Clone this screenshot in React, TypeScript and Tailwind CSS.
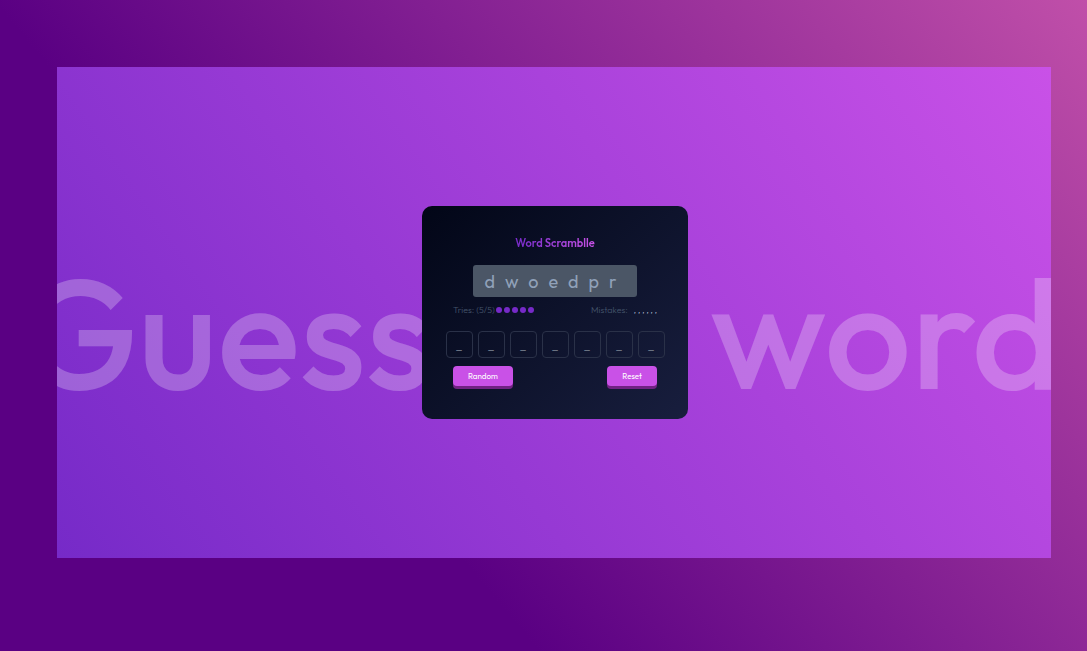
import React from "react";

const scrambled = "dwoedpr";
const maxTries = 5;
const maxMistakes = 6;

function ActionButton({ children }: { children: React.ReactNode }) {
  return (
    <button
      type="button"
      className="h-5 rounded bg-[#c951e7] px-[15px] text-[8px] leading-5 font-normal text-white shadow-[0_3px_0_#702283]"
    >
      {children}
    </button>
  );
}

export default function App() {
  return (
    <div className="flex min-h-screen flex-col bg-[linear-gradient(50deg,#5a0083_33%,#c04fa9_100%)] pt-[67px] pr-9 pb-[93px] pl-[57px] font-[Outfit,Lato,sans-serif]">
      <main className="relative isolate flex grow items-center justify-center overflow-hidden bg-[linear-gradient(55deg,#762ac8,#c951e7)] pl-[2px]">
        <div className="absolute inset-0 -z-10 flex items-center justify-between pt-[38px] text-[154px] leading-none font-medium text-white/25">
          <span className="-ml-[38px]">Guess</span>
          <span className="-mr-[10px]">word</span>
        </div>
        <section className="flex w-[266px] flex-col items-center rounded-[10px] bg-[linear-gradient(135deg,#020617,#181e3e)] px-6 pt-[29px] pb-8">
          <h1 className="bg-linear-to-r from-[#762ac8] to-[#c951e7] bg-clip-text text-[11px] leading-4 font-semibold text-transparent">
            Word Scramblle
          </h1>
          <p className="mt-[14px] h-8 rounded-[3px] bg-[#4b5666] pl-[11px] pr-[10px] text-[18px] leading-[34px] font-normal tracking-[10px] text-slate-400">
            {scrambled}
          </p>
          <div className="mt-[7px] flex w-full items-center justify-between px-[7px] text-[9px] leading-3 font-light text-slate-600">
            <div className="flex items-center gap-px">
              <span>Tries: (5/5)</span>
              <span className="flex gap-[2px]">
                {Array.from({ length: maxTries }, (_, i) => (
                  <i key={i} className="size-[6px] rounded-full bg-[#762ac8]" />
                ))}
              </span>
            </div>
            <div className="flex gap-[6px]">
              <span>Mistakes:</span>
              <span className="flex gap-[2px] text-[8px] text-slate-300">
                {Array.from({ length: maxMistakes }, (_, i) => (
                  <span key={i}>,</span>
                ))}
              </span>
            </div>
          </div>
          <div className="mt-[15px] flex gap-[5px]">
            {scrambled.split("").map((_, i) => (
              <input
                key={i}
                aria-label={`Letter ${i + 1}`}
                placeholder="_"
                maxLength={1}
                className="size-[27px] rounded border border-[#2a3148] bg-transparent text-center text-[12px] text-slate-400 outline-none placeholder:text-gray-500"
              />
            ))}
          </div>
          <div className="mt-2 flex w-full justify-between px-[7px] pb-px">
            <ActionButton>Random</ActionButton>
            <ActionButton>Reset</ActionButton>
          </div>
        </section>
      </main>
    </div>
  );
}
